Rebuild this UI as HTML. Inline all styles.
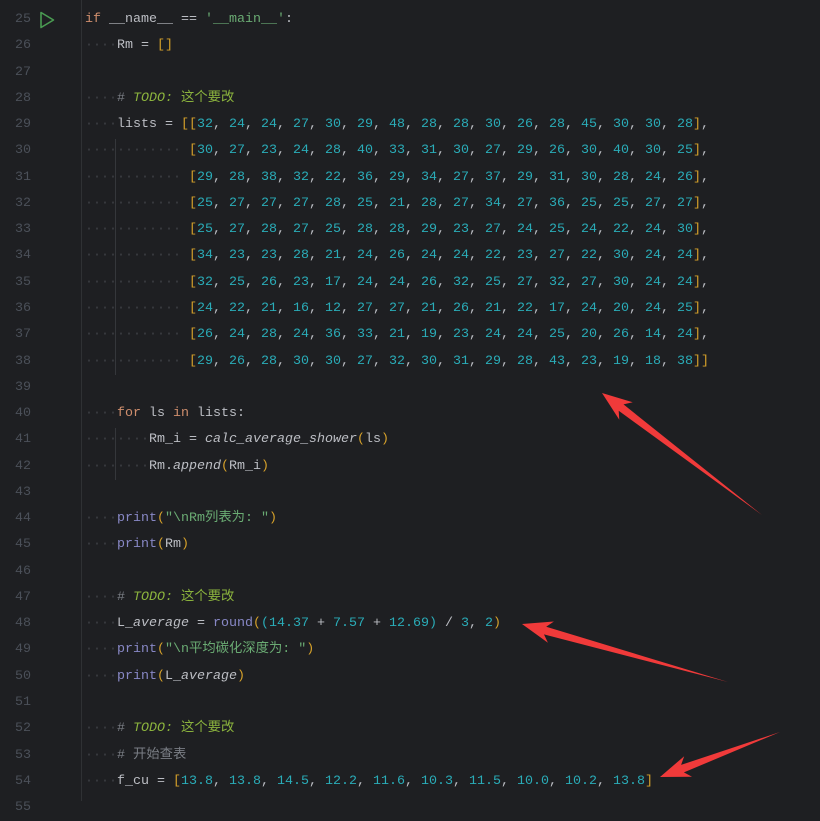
<!DOCTYPE html>
<html><head><meta charset="utf-8"><style>
html,body{margin:0;padding:0;background:#1e1f22;}
body{width:820px;height:801px;overflow:hidden;position:relative;font-family:"Liberation Mono","Noto Sans CJK SC",monospace;font-size:13.33px;}
.ln{position:absolute;left:0;width:31px;text-align:right;color:#4b5059;}
.c{position:absolute;left:85px;color:#bcbec4;white-space:pre;}
.row{position:absolute;left:0;height:26.27px;line-height:26.27px;width:820px;}
.gut{position:absolute;left:81px;top:0;width:1px;height:801px;background:#2f3134;}
.d{color:#3e4045;}
.k{color:#cf8e6d;}
.n{color:#2aacb8;}
.s{color:#6aab73;}
.y{color:#d5a02a;}
.m{color:#7a7e85;}
.t{color:#8bb33d;font-style:italic;}
.tc{color:#8bb33d;}
.b{color:#8888c6;}
.it{font-style:italic;}
.g{position:absolute;left:115px;width:1px;background:#35373b;}
</style></head><body>
<div class="gut"></div>
<div class="g" style="top:139px;height:236px"></div>
<div class="g" style="top:428px;height:52px"></div>
<svg style="position:absolute;left:38px;top:11px" width="18" height="18" viewBox="0 0 18 18"><path d="M3 1.5 L15.5 9 L3 16.5 Z" fill="none" stroke="#4a9b52" stroke-width="1.6" stroke-linejoin="round"/></svg>

<div class="row" style="top:-19.3px"><span class="ln">24</span></div>
<div class="row" style="top:7px"><span class="ln">25</span><span class="c"><span class="k">if</span> __name__ == <span class="s">'__main__'</span>:</span></div>
<div class="row" style="top:33.27px"><span class="ln">26</span><span class="c"><span class="d">····</span>Rm = <span class="y">[]</span></span></div>
<div class="row" style="top:59.54px"><span class="ln">27</span></div>
<div class="row" style="top:85.81px"><span class="ln">28</span><span class="c"><span class="d">····</span><span class="m"># </span><span class="t">TODO: </span><span class="tc">这个要改</span></span></div>
<div class="row" style="top:112.08px"><span class="ln">29</span><span class="c"><span class="d">····</span>lists = <span class="y">[[</span><span class="n">32</span>, <span class="n">24</span>, <span class="n">24</span>, <span class="n">27</span>, <span class="n">30</span>, <span class="n">29</span>, <span class="n">48</span>, <span class="n">28</span>, <span class="n">28</span>, <span class="n">30</span>, <span class="n">26</span>, <span class="n">28</span>, <span class="n">45</span>, <span class="n">30</span>, <span class="n">30</span>, <span class="n">28</span><span class="y">]</span>,</span></div>
<div class="row" style="top:138.35px"><span class="ln">30</span><span class="c"><span class="d">············ </span><span class="y">[</span><span class="n">30</span>, <span class="n">27</span>, <span class="n">23</span>, <span class="n">24</span>, <span class="n">28</span>, <span class="n">40</span>, <span class="n">33</span>, <span class="n">31</span>, <span class="n">30</span>, <span class="n">27</span>, <span class="n">29</span>, <span class="n">26</span>, <span class="n">30</span>, <span class="n">40</span>, <span class="n">30</span>, <span class="n">25</span><span class="y">]</span>,</span></div>
<div class="row" style="top:164.62px"><span class="ln">31</span><span class="c"><span class="d">············ </span><span class="y">[</span><span class="n">29</span>, <span class="n">28</span>, <span class="n">38</span>, <span class="n">32</span>, <span class="n">22</span>, <span class="n">36</span>, <span class="n">29</span>, <span class="n">34</span>, <span class="n">27</span>, <span class="n">37</span>, <span class="n">29</span>, <span class="n">31</span>, <span class="n">30</span>, <span class="n">28</span>, <span class="n">24</span>, <span class="n">26</span><span class="y">]</span>,</span></div>
<div class="row" style="top:190.89px"><span class="ln">32</span><span class="c"><span class="d">············ </span><span class="y">[</span><span class="n">25</span>, <span class="n">27</span>, <span class="n">27</span>, <span class="n">27</span>, <span class="n">28</span>, <span class="n">25</span>, <span class="n">21</span>, <span class="n">28</span>, <span class="n">27</span>, <span class="n">34</span>, <span class="n">27</span>, <span class="n">36</span>, <span class="n">25</span>, <span class="n">25</span>, <span class="n">27</span>, <span class="n">27</span><span class="y">]</span>,</span></div>
<div class="row" style="top:217.16px"><span class="ln">33</span><span class="c"><span class="d">············ </span><span class="y">[</span><span class="n">25</span>, <span class="n">27</span>, <span class="n">28</span>, <span class="n">27</span>, <span class="n">25</span>, <span class="n">28</span>, <span class="n">28</span>, <span class="n">29</span>, <span class="n">23</span>, <span class="n">27</span>, <span class="n">24</span>, <span class="n">25</span>, <span class="n">24</span>, <span class="n">22</span>, <span class="n">24</span>, <span class="n">30</span><span class="y">]</span>,</span></div>
<div class="row" style="top:243.43px"><span class="ln">34</span><span class="c"><span class="d">············ </span><span class="y">[</span><span class="n">34</span>, <span class="n">23</span>, <span class="n">23</span>, <span class="n">28</span>, <span class="n">21</span>, <span class="n">24</span>, <span class="n">26</span>, <span class="n">24</span>, <span class="n">24</span>, <span class="n">22</span>, <span class="n">23</span>, <span class="n">27</span>, <span class="n">22</span>, <span class="n">30</span>, <span class="n">24</span>, <span class="n">24</span><span class="y">]</span>,</span></div>
<div class="row" style="top:269.7px"><span class="ln">35</span><span class="c"><span class="d">············ </span><span class="y">[</span><span class="n">32</span>, <span class="n">25</span>, <span class="n">26</span>, <span class="n">23</span>, <span class="n">17</span>, <span class="n">24</span>, <span class="n">24</span>, <span class="n">26</span>, <span class="n">32</span>, <span class="n">25</span>, <span class="n">27</span>, <span class="n">32</span>, <span class="n">27</span>, <span class="n">30</span>, <span class="n">24</span>, <span class="n">24</span><span class="y">]</span>,</span></div>
<div class="row" style="top:295.97px"><span class="ln">36</span><span class="c"><span class="d">············ </span><span class="y">[</span><span class="n">24</span>, <span class="n">22</span>, <span class="n">21</span>, <span class="n">16</span>, <span class="n">12</span>, <span class="n">27</span>, <span class="n">27</span>, <span class="n">21</span>, <span class="n">26</span>, <span class="n">21</span>, <span class="n">22</span>, <span class="n">17</span>, <span class="n">24</span>, <span class="n">20</span>, <span class="n">24</span>, <span class="n">25</span><span class="y">]</span>,</span></div>
<div class="row" style="top:322.24px"><span class="ln">37</span><span class="c"><span class="d">············ </span><span class="y">[</span><span class="n">26</span>, <span class="n">24</span>, <span class="n">28</span>, <span class="n">24</span>, <span class="n">36</span>, <span class="n">33</span>, <span class="n">21</span>, <span class="n">19</span>, <span class="n">23</span>, <span class="n">24</span>, <span class="n">24</span>, <span class="n">25</span>, <span class="n">20</span>, <span class="n">26</span>, <span class="n">14</span>, <span class="n">24</span><span class="y">]</span>,</span></div>
<div class="row" style="top:348.51px"><span class="ln">38</span><span class="c"><span class="d">············ </span><span class="y">[</span><span class="n">29</span>, <span class="n">26</span>, <span class="n">28</span>, <span class="n">30</span>, <span class="n">30</span>, <span class="n">27</span>, <span class="n">32</span>, <span class="n">30</span>, <span class="n">31</span>, <span class="n">29</span>, <span class="n">28</span>, <span class="n">43</span>, <span class="n">23</span>, <span class="n">19</span>, <span class="n">18</span>, <span class="n">38</span><span class="y">]]</span></span></div>
<div class="row" style="top:374.78px"><span class="ln">39</span></div>
<div class="row" style="top:401.05px"><span class="ln">40</span><span class="c"><span class="d">····</span><span class="k">for</span> ls <span class="k">in</span> lists:</span></div>
<div class="row" style="top:427.32px"><span class="ln">41</span><span class="c"><span class="d">········</span>Rm_i = <span class="it">calc_average_shower</span><span class="y">(</span>ls<span class="y">)</span></span></div>
<div class="row" style="top:453.59px"><span class="ln">42</span><span class="c"><span class="d">········</span>Rm.<span class="it">append</span><span class="y">(</span>Rm_i<span class="y">)</span></span></div>
<div class="row" style="top:479.86px"><span class="ln">43</span></div>
<div class="row" style="top:506.13px"><span class="ln">44</span><span class="c"><span class="d">····</span><span class="b">print</span><span class="y">(</span><span class="s">"\nRm列表为: "</span><span class="y">)</span></span></div>
<div class="row" style="top:532.4px"><span class="ln">45</span><span class="c"><span class="d">····</span><span class="b">print</span><span class="y">(</span>Rm<span class="y">)</span></span></div>
<div class="row" style="top:558.67px"><span class="ln">46</span></div>
<div class="row" style="top:584.94px"><span class="ln">47</span><span class="c"><span class="d">····</span><span class="m"># </span><span class="t">TODO: </span><span class="tc">这个要改</span></span></div>
<div class="row" style="top:611.21px"><span class="ln">48</span><span class="c"><span class="d">····</span>L_<span class="it">average</span> = <span class="b">round</span><span class="y">(</span><span class="n">(</span><span class="n">14.37</span> + <span class="n">7.57</span> + <span class="n">12.69</span><span class="n">)</span> / <span class="n">3</span>, <span class="n">2</span><span class="y">)</span></span></div>
<div class="row" style="top:637.48px"><span class="ln">49</span><span class="c"><span class="d">····</span><span class="b">print</span><span class="y">(</span><span class="s">"\n平均碳化深度为: "</span><span class="y">)</span></span></div>
<div class="row" style="top:663.75px"><span class="ln">50</span><span class="c"><span class="d">····</span><span class="b">print</span><span class="y">(</span>L_<span class="it">average</span><span class="y">)</span></span></div>
<div class="row" style="top:690.02px"><span class="ln">51</span></div>
<div class="row" style="top:716.29px"><span class="ln">52</span><span class="c"><span class="d">····</span><span class="m"># </span><span class="t">TODO: </span><span class="tc">这个要改</span></span></div>
<div class="row" style="top:742.56px"><span class="ln">53</span><span class="c"><span class="d">····</span><span class="m"># 开始查表</span></span></div>
<div class="row" style="top:768.83px"><span class="ln">54</span><span class="c"><span class="d">····</span>f_cu = <span class="y">[</span><span class="n">13.8</span>, <span class="n">13.8</span>, <span class="n">14.5</span>, <span class="n">12.2</span>, <span class="n">11.6</span>, <span class="n">10.3</span>, <span class="n">11.5</span>, <span class="n">10.0</span>, <span class="n">10.2</span>, <span class="n">13.8</span><span class="y">]</span></span></div>
<div class="row" style="top:795.1px"><span class="ln">55</span></div>

<svg style="position:absolute;left:0;top:0" width="820" height="801">
<polygon fill="#f03a3a" points="602,393 619.3,419.8 618.7,410.8 762,515 623.5,404.4 632.7,402.2"/>
<polygon fill="#f03a3a" points="522,624 547.9,642.7 544,634.4 728,682 546.2,626.7 553.9,621.5"/>
<polygon fill="#f03a3a" points="660,777 692,776.8 683.9,772.4 780,732 681.1,764.9 684.2,756.2"/>
</svg>
</body></html>
